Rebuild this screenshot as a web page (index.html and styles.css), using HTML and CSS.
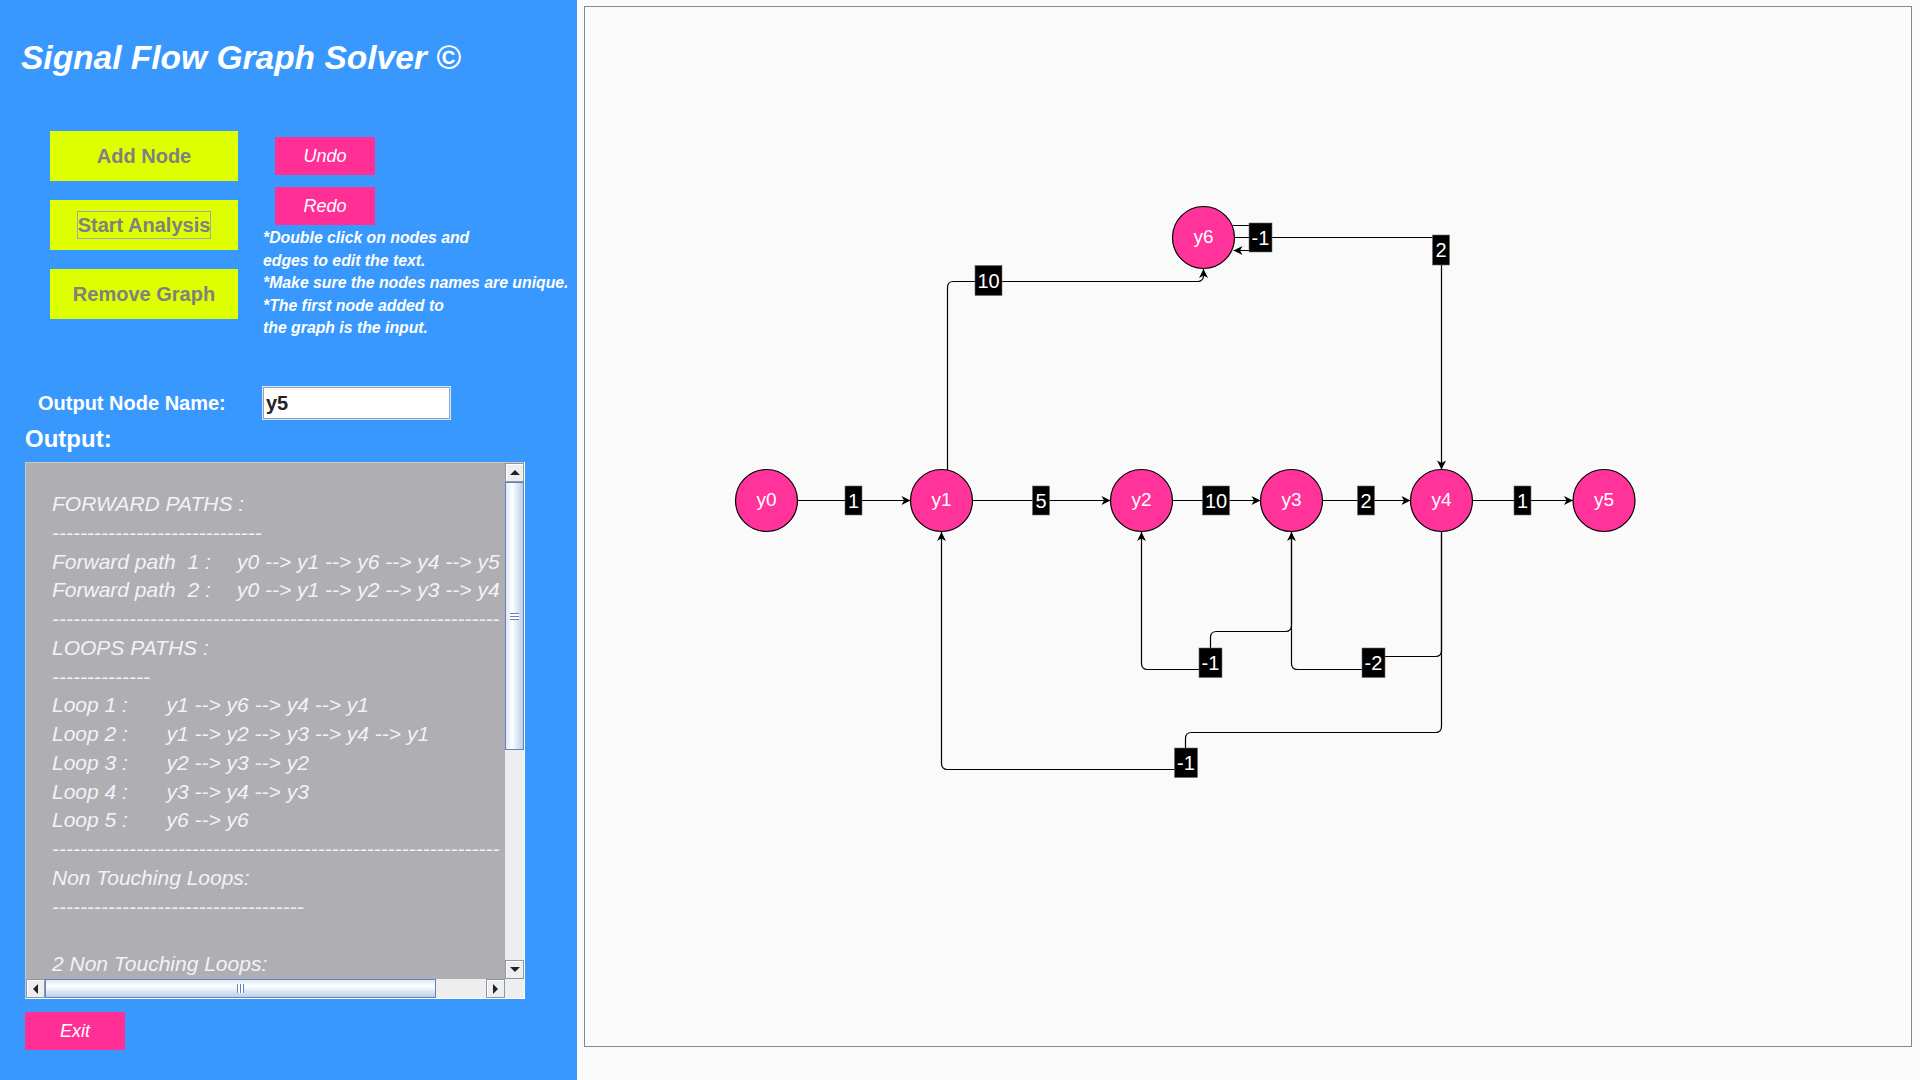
FILE: index.html
```html
<!DOCTYPE html>
<html>
<head>
<meta charset="utf-8">
<title>Signal Flow Graph Solver</title>
<link rel="stylesheet" href="styles.css">
</head>
<body>
<div class="app">
  <aside class="panel">
    <h1 class="title">Signal Flow Graph Solver ©</h1>
    <div class="controls">
      <div class="main-buttons">
        <button class="btn-yellow">Add Node</button>
        <button class="btn-yellow"><span class="focus">Start Analysis</span></button>
        <button class="btn-yellow">Remove Graph</button>
      </div>
      <div class="side">
        <button class="btn-pink">Undo</button>
        <button class="btn-pink">Redo</button>
        <p class="notes">*Double click on nodes and<br>edges to edit the text.<br>*Make sure the nodes names are unique.<br>*The first node added to<br>the graph is the input.</p>
      </div>
    </div>
    <div class="output-row">
      <label class="out-label">Output Node Name:</label>
      <input class="out-input" type="text" value="y5">
    </div>
    <div class="output-title">Output:</div>
    <div class="scrollpane">
      <div class="viewport"><div>FORWARD PATHS :</div><div>------------------------------</div><div><span class="c-fp">Forward path  1 :</span>y0 --&gt; y1 --&gt; y6 --&gt; y4 --&gt; y5</div><div><span class="c-fp">Forward path  2 :</span>y0 --&gt; y1 --&gt; y2 --&gt; y3 --&gt; y4</div><div>----------------------------------------------------------------</div><div>LOOPS PATHS :</div><div>--------------</div><div><span class="c-lp">Loop 1 :</span>y1 --&gt; y6 --&gt; y4 --&gt; y1</div><div><span class="c-lp">Loop 2 :</span>y1 --&gt; y2 --&gt; y3 --&gt; y4 --&gt; y1</div><div><span class="c-lp">Loop 3 :</span>y2 --&gt; y3 --&gt; y2</div><div><span class="c-lp">Loop 4 :</span>y3 --&gt; y4 --&gt; y3</div><div><span class="c-lp">Loop 5 :</span>y6 --&gt; y6</div><div>----------------------------------------------------------------</div><div>Non Touching Loops:</div><div>------------------------------------</div><div> </div><div>2 Non Touching Loops:</div></div>
      <div class="vscroll">
        <div class="sb-btn"><span class="tri tri-up"></span></div>
        <div class="thumb-v"><span class="grip-v"></span></div>
        <div class="track"></div>
        <div class="sb-btn"><span class="tri tri-down"></span></div>
      </div>
      <div class="hscroll">
        <div class="sb-btn"><span class="tri tri-left"></span></div>
        <div class="thumb-h"><span class="grip-h"></span></div>
        <div class="track"></div>
        <div class="sb-btn"><span class="tri tri-right"></span></div>
      </div>
      <div class="corner"></div>
    </div>
    <button class="btn-pink exit">Exit</button>
  </aside>
  <main class="stage">
    <div class="canvas">
      <svg class="graph" viewBox="585 8 1326 1039" width="1326" height="1039">
        <defs>
          <marker id="ar" viewBox="-10 -5 10 10" refX="0" refY="0" markerWidth="10" markerHeight="10" markerUnits="userSpaceOnUse" orient="auto">
            <path d="M-9,-4.5 L0,0 L-9,4.5 L-6.5,0 Z" fill="#000"/>
          </marker>
        </defs>
        <g class="edges">
          <path d="M797.5 501.5 H910.5" marker-end="url(#ar)"/>
          <path d="M972.5 501.5 H1110.5" marker-end="url(#ar)"/>
          <path d="M1172.5 501.5 H1260.5" marker-end="url(#ar)"/>
          <path d="M1322.5 501.5 H1410.5" marker-end="url(#ar)"/>
          <path d="M1472.5 501.5 H1573" marker-end="url(#ar)"/>
          <path d="M947.5 471 V288.5 Q947.5 282.5 953.5 282.5 H1197.5 Q1203.5 282.5 1203.5 276.5 V270" marker-end="url(#ar)"/>
          <path d="M1234.5 238.5 H1441.5 V470.5" marker-end="url(#ar)"/>
          <path d="M1233 226.5 H1261.5 V251.5 H1233.5" marker-end="url(#ar)"/>
          <path d="M1441.5 532.5 V651.5 Q1441.5 657.5 1435.5 657.5 H1373.5 V670.5 H1297.5 Q1291.5 670.5 1291.5 664.5 V533" marker-end="url(#ar)"/>
          <path d="M1291.5 532.5 V626.5 Q1291.5 632.5 1285.5 632.5 H1216.5 Q1210.5 632.5 1210.5 638.5 V670.5 H1147.5 Q1141.5 670.5 1141.5 664.5 V533" marker-end="url(#ar)"/>
          <path d="M1441.5 532.5 V727.5 Q1441.5 733.5 1435.5 733.5 H1191.5 Q1185.5 733.5 1185.5 739.5 V770.5 H947.5 Q941.5 770.5 941.5 764.5 V533" marker-end="url(#ar)"/>
        </g>
        <g class="nodes">
          <circle cx="766.5" cy="501.5" r="31"/><text x="766.5" y="500">y0</text>
          <circle cx="941.5" cy="501.5" r="31"/><text x="941.5" y="500">y1</text>
          <circle cx="1141.5" cy="501.5" r="31"/><text x="1141.5" y="500">y2</text>
          <circle cx="1291.5" cy="501.5" r="31"/><text x="1291.5" y="500">y3</text>
          <circle cx="1441.5" cy="501.5" r="31"/><text x="1441.5" y="500">y4</text>
          <circle cx="1604" cy="501.5" r="31"/><text x="1604" y="500">y5</text>
          <circle cx="1203.5" cy="238.5" r="31"/><text x="1203.5" y="237">y6</text>
        </g>
        <g class="labels">
          <rect x="845" y="487" width="17" height="29"/><text x="853.5" y="501.5">1</text>
          <rect x="1032.5" y="487" width="17" height="29"/><text x="1041" y="501.5">5</text>
          <rect x="1202.5" y="487" width="27" height="29"/><text x="1216" y="501.5">10</text>
          <rect x="1357.5" y="487" width="17" height="29"/><text x="1366" y="501.5">2</text>
          <rect x="1514" y="487" width="17" height="29"/><text x="1522.5" y="501.5">1</text>
          <rect x="975" y="266.5" width="27" height="30"/><text x="988.5" y="281.5">10</text>
          <rect x="1249" y="224" width="23" height="29"/><text x="1260.5" y="238.5">-1</text>
          <rect x="1432.5" y="236" width="17" height="30"/><text x="1441" y="251">2</text>
          <rect x="1199" y="649" width="23" height="29.5"/><text x="1210.5" y="663.5">-1</text>
          <rect x="1362" y="649" width="23" height="29.5"/><text x="1373.5" y="663.5">-2</text>
          <rect x="1174.5" y="749" width="23" height="29.5"/><text x="1186" y="763.5">-1</text>
        </g>
      </svg>
    </div>
  </main>
</div>
</body>
</html>
```

FILE: styles.css
```css
* { box-sizing: border-box; }
html, body { margin: 0; padding: 0; }
body {
  width: 1920px;
  height: 1080px;
  overflow: hidden;
  background: #fafafa;
  font-family: "Liberation Sans", Arial, sans-serif;
}
.app { display: flex; height: 1080px; }

.panel {
  width: 577px;
  flex: none;
  background: #3898fe;
  display: flex;
  flex-direction: column;
  align-items: flex-start;
}
.title {
  margin: 0;
  padding: 38px 0 0 21px;
  font-size: 33.5px;
  line-height: 40px;
  font-weight: bold;
  font-style: italic;
  color: #ffffff;
  white-space: nowrap;
}
.controls {
  display: flex;
  align-items: flex-start;
  margin-top: 53px;
  height: 256px;
}
.main-buttons {
  margin-left: 50px;
  width: 188px;
  display: flex;
  flex-direction: column;
  gap: 19px;
}
.btn-yellow {
  width: 188px;
  height: 50px;
  border: none;
  padding: 0;
  background: #ddff00;
  color: #808080;
  font: bold 20px "Liberation Sans", Arial, sans-serif;
  display: flex;
  align-items: center;
  justify-content: center;
}
.focus {
  display: inline-block;
  border: 1px solid #a2a2c6;
  padding: 2px 0;
  line-height: 22px;
}
.side {
  margin-left: 26px;
  padding-top: 6px;
  display: flex;
  flex-direction: column;
  align-items: flex-start;
}
.btn-pink {
  width: 100px;
  height: 38px;
  border: none;
  padding: 0;
  background: #ff2f96;
  color: #ffffff;
  font: italic 18px "Liberation Sans", Arial, sans-serif;
}
.side .btn-pink { margin-left: 11px; }
.side .btn-pink + .btn-pink { margin-top: 12px; }
.notes {
  margin: 2px 0 0 -1px;
  font: bold italic 15.8px/22.5px "Liberation Sans", Arial, sans-serif;
  color: #ffffff;
  white-space: nowrap;
}

.output-row {
  display: flex;
  align-items: center;
  height: 32px;
}
.out-label {
  width: 263px;
  padding-left: 38px;
  font: bold 20px "Liberation Sans", Arial, sans-serif;
  color: #ffffff;
}
.out-input {
  width: 187px;
  height: 32px;
  margin: 0;
  border: 1px solid #8da0b6;
  outline: 1px solid #dbe6f3;
  background: #ffffff;
  padding: 0 2px;
  font: bold 20px "Liberation Sans", Arial, sans-serif;
  color: #222222;
}
.output-title {
  margin-top: 6px;
  padding-left: 25px;
  font: bold 24px/28px "Liberation Sans", Arial, sans-serif;
  color: #ffffff;
}

.scrollpane {
  margin: 9px 0 0 25px;
  width: 500px;
  height: 537px;
  border: 1px solid;
  border-color: #c8c8c8 #ffffff #ffffff #c8c8c8;
  display: grid;
  grid-template-columns: 1fr 19px;
  grid-template-rows: 1fr 19px;
}
.viewport {
  background: #afaeb3;
  overflow: hidden;
  padding: 27px 0 0 26px;
  font: italic 21px/28.75px "Liberation Sans", Arial, sans-serif;
  color: #f3f3f3;
  white-space: pre;
}
.c-fp { display: inline-block; width: 185px; }
.c-lp { display: inline-block; width: 114.5px; }

.vscroll {
  display: flex;
  flex-direction: column;
  background: #eeeeee;
}
.hscroll {
  display: flex;
  flex-direction: row;
  background: #eeeeee;
}
.corner { background: #eeeeee; }
.sb-btn {
  flex: none;
  width: 19px;
  height: 19px;
  background: #eeeeee;
  border: 1px solid #8a97a6;
  box-shadow: inset 1px 1px 0 #ffffff;
  display: flex;
  align-items: center;
  justify-content: center;
}
.track { flex: 1; background: #eeeeee; }
.thumb-v {
  flex: none;
  height: 268px;
  border: 1px solid #6382bf;
  background: linear-gradient(to right, #dce8f4, #ffffff 35%, #e4edf7 60%, #b9cfe6);
  display: flex;
  align-items: center;
  justify-content: center;
}
.grip-v {
  width: 9px;
  height: 7px;
  background: repeating-linear-gradient(to bottom, #6382bf 0 1px, #ffffff 1px 3px);
}
.thumb-h {
  flex: none;
  width: 391px;
  border: 1px solid #6382bf;
  background: linear-gradient(to bottom, #dce8f4, #ffffff 35%, #e4edf7 60%, #b9cfe6);
  display: flex;
  align-items: center;
  justify-content: center;
}
.grip-h {
  width: 7px;
  height: 9px;
  background: repeating-linear-gradient(to right, #6382bf 0 1px, #ffffff 1px 3px);
}
.tri { width: 0; height: 0; display: block; }
.tri-up { border-left: 5px solid transparent; border-right: 5px solid transparent; border-bottom: 5px solid #222; }
.tri-down { border-left: 5px solid transparent; border-right: 5px solid transparent; border-top: 5px solid #222; }
.tri-left { border-top: 5px solid transparent; border-bottom: 5px solid transparent; border-right: 5px solid #222; }
.tri-right { border-top: 5px solid transparent; border-bottom: 5px solid transparent; border-left: 5px solid #222; }

.exit { margin: 13px 0 0 25px; }

.stage {
  flex: 1;
  padding: 6px 8px 33px 7px;
  background: #fafafa;
}
.canvas {
  width: 1328px;
  height: 1041px;
  border: 1px solid #7a8a9a;
  background: #fafafa;
}
.graph { display: block; }
.edges path { fill: none; stroke: #000000; stroke-width: 1.2; }
.nodes circle { fill: #ff3399; stroke: #000000; stroke-width: 1.2; }
.nodes text {
  fill: #ffffff;
  font: 19px "Liberation Sans", Arial, sans-serif;
  text-anchor: middle;
  dominant-baseline: central;
}
.labels rect { fill: #000000; stroke: #6e6e6e; stroke-width: 0.6; }
.labels text {
  fill: #ffffff;
  font: 20px "Liberation Sans", Arial, sans-serif;
  text-anchor: middle;
  dominant-baseline: central;
}
```
